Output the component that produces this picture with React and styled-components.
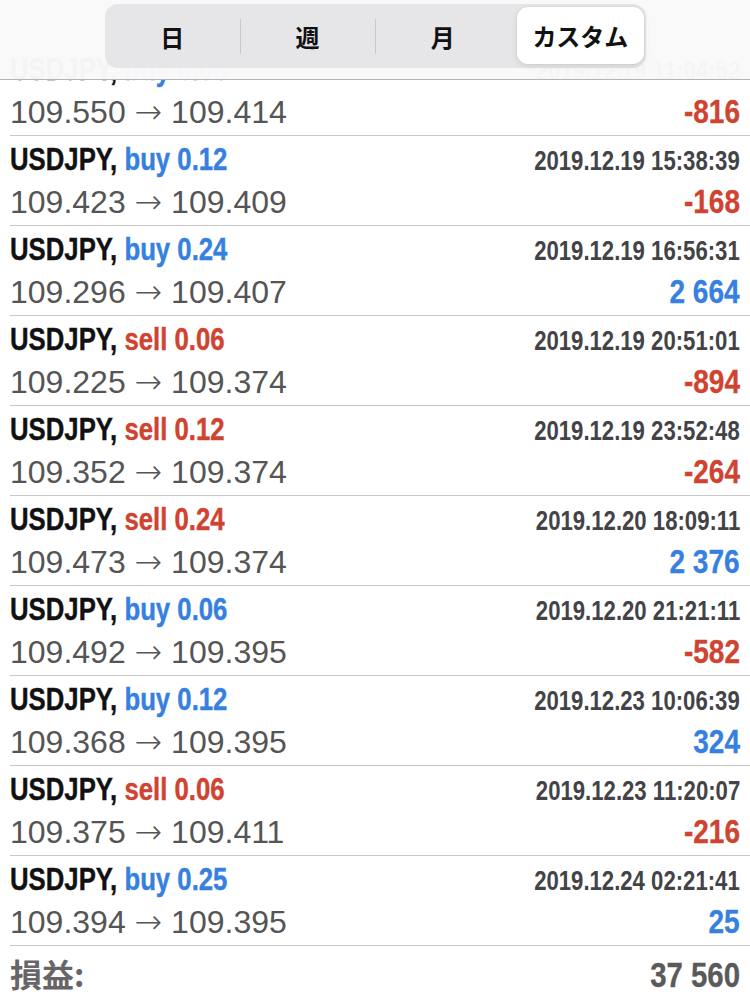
import React from "react";
import styled, { createGlobalStyle, css } from "styled-components";

const GlobalStyle = createGlobalStyle`
  html, body { margin: 0; padding: 0; background: #ffffff; }
  body { font-family: "Liberation Sans", Arial, sans-serif; }
`;

const condensed = (ratio, origin) => css`
  display: inline-block;
  font-family: "Liberation Sans", Arial, sans-serif;
  font-weight: 700;
  transform: scaleX(${ratio});
  transform-origin: ${origin} center;
`;

const Page = styled.div`
  position: relative;
  width: 750px;
  height: 1001px;
  overflow: hidden;
  background: #ffffff;
`;

const Header = styled.header`
  position: absolute;
  top: 0;
  left: 0;
  right: 0;
  height: 80px;
  display: flex;
  justify-content: center;
  align-items: flex-start;
  padding-top: 4px;
  box-sizing: border-box;
  background: rgba(249, 249, 249, 0.98);
  border-bottom: 1px solid #b4b4b4;
  z-index: 2;
`;

const Segmented = styled.div`
  width: 541px;
  height: 64px;
  display: flex;
  background: #e6e6e9;
  border-radius: 13px;
`;

const Segment = styled.div`
  position: relative;
  flex: none;
  width: 25%;
  box-sizing: border-box;
  display: flex;
  padding: ${(p) => (p.$active ? "3px 2px 4px 7px" : "0")};
  &::before {
    content: "";
    display: ${(p) => (p.$divider ? "block" : "none")};
    position: absolute;
    left: 0;
    top: 15px;
    width: 1px;
    height: 35px;
    background: #c9c9cd;
  }
`;

const Thumb = styled.div`
  flex: 1;
  display: flex;
  align-items: center;
  justify-content: center;
  font-family: "Noto Sans CJK JP", sans-serif;
  font-weight: 700;
  font-size: 24px;
  color: #111;
  border-radius: 11px;
  background: ${(p) => (p.$active ? "#ffffff" : "transparent")};
  box-shadow: ${(p) =>
    p.$active ? "0 2px 6px rgba(0,0,0,0.10), 0 0 0 0.5px rgba(0,0,0,0.04)" : "none"};
`;

const List = styled.div`
  padding-top: 46px;
`;

const Row = styled.div`
  margin-left: 10px;
  padding: 2px 10px 4px 0;
  height: 90px;
  box-sizing: border-box;
  border-bottom: 1px solid #c8c8c8;
`;

const TopLine = styled.div`
  display: flex;
  justify-content: space-between;
  align-items: baseline;
  height: 44px;
  line-height: 44px;
  white-space: nowrap;
`;

const BottomLine = styled.div`
  display: flex;
  justify-content: space-between;
  align-items: baseline;
  height: 40px;
  line-height: 40px;
  white-space: nowrap;
`;

const Symbol = styled.span`
  ${condensed(0.83, "left")}
  font-size: 31px;
  color: #111111;
  -webkit-text-stroke: 0.4px currentColor;
`;

const Side = styled.span`
  color: ${(p) => (p.$sell ? "#cf4330" : "#3680e0")};
`;

const Time = styled.span`
  ${condensed(0.82, "right")}
  font-size: 27px;
  color: #434347;
`;

const Prices = styled.span`
  font-family: "Liberation Sans", Arial, sans-serif;
  font-size: 32px;
  color: #555555;
`;

const Arrow = styled.span`
  font-family: "DejaVu Sans", sans-serif;
  font-size: 33px;
  font-weight: 200;
`;

const Profit = styled.span`
  ${condensed(0.85, "right")}
  font-size: 33px;
  color: ${(p) => (p.$neg ? "#cf4330" : "#3680e0")};
  -webkit-text-stroke: 0.3px currentColor;
`;

const Footer = styled.div`
  display: flex;
  justify-content: space-between;
  align-items: baseline;
  padding: 0 10px;
  height: 54px;
  line-height: 54px;
`;

const TotalLabel = styled.span`
  font-family: "Noto Sans CJK JP", sans-serif;
  font-weight: 700;
  font-size: 32px;
  color: #666666;
`;

const TotalValue = styled.span`
  ${condensed(0.84, "right")}
  font-size: 35px;
  color: #5a5a5a;
  -webkit-text-stroke: 0.3px currentColor;
`;

const trades = [
  { side: "buy", lot: "0.06", time: "2019.12.19 11:04:52", open: "109.550", close: "109.414", profit: "-816" },
  { side: "buy", lot: "0.12", time: "2019.12.19 15:38:39", open: "109.423", close: "109.409", profit: "-168" },
  { side: "buy", lot: "0.24", time: "2019.12.19 16:56:31", open: "109.296", close: "109.407", profit: "2 664" },
  { side: "sell", lot: "0.06", time: "2019.12.19 20:51:01", open: "109.225", close: "109.374", profit: "-894" },
  { side: "sell", lot: "0.12", time: "2019.12.19 23:52:48", open: "109.352", close: "109.374", profit: "-264" },
  { side: "sell", lot: "0.24", time: "2019.12.20 18:09:11", open: "109.473", close: "109.374", profit: "2 376" },
  { side: "buy", lot: "0.06", time: "2019.12.20 21:21:11", open: "109.492", close: "109.395", profit: "-582" },
  { side: "buy", lot: "0.12", time: "2019.12.23 10:06:39", open: "109.368", close: "109.395", profit: "324" },
  { side: "sell", lot: "0.06", time: "2019.12.23 11:20:07", open: "109.375", close: "109.411", profit: "-216" },
  { side: "buy", lot: "0.25", time: "2019.12.24 02:21:41", open: "109.394", close: "109.395", profit: "25" },
];

const tabs = ["日", "週", "月", "カスタム"];
const activeTab = 3;

export default function App() {
  return (
    <Page>
      <GlobalStyle />
      <Header>
        <Segmented>
          {tabs.map((t, i) => (
            <Segment
              key={t}
              $active={i === activeTab}
              $divider={i > 0 && i !== activeTab && i - 1 !== activeTab}
            >
              <Thumb $active={i === activeTab}>{t}</Thumb>
            </Segment>
          ))}
        </Segmented>
      </Header>
      <List>
        {trades.map((tr, i) => (
          <Row key={i}>
            <TopLine>
              <Symbol>
                USDJPY, <Side $sell={tr.side === "sell"}>{tr.side} {tr.lot}</Side>
              </Symbol>
              <Time>{tr.time}</Time>
            </TopLine>
            <BottomLine>
              <Prices>
                {tr.open} <Arrow>→</Arrow> {tr.close}
              </Prices>
              <Profit $neg={tr.profit.startsWith("-")}>{tr.profit}</Profit>
            </BottomLine>
          </Row>
        ))}
      </List>
      <Footer>
        <TotalLabel>損益:</TotalLabel>
        <TotalValue>37 560</TotalValue>
      </Footer>
    </Page>
  );
}
